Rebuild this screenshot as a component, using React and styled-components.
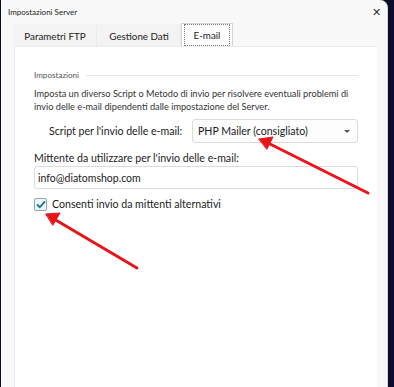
import React from 'react'
import styled, { createGlobalStyle } from 'styled-components'

const GlobalStyle = createGlobalStyle`
  html, body {
    margin: 0;
    padding: 0;
    background: #0b0c2c;
  }
  body {
    font-family: Lato, 'Noto Sans', sans-serif;
    color: #1b1b1b;
  }
`

const Screen = styled.div`
  position: relative;
  width: 394px;
  height: 387px;
  overflow: hidden;
  background: #0b0c2c;
`

const Window = styled.div`
  display: flex;
  flex-direction: column;
  margin-left: 1px;
  width: 387px;
  height: 387px;
  background: #f8f8f8;
  border-right: 1px solid #d6d6d6;
  border-top-right-radius: 8px;
  box-sizing: border-box;
`

const TitleBar = styled.div`
  display: flex;
  align-items: center;
  justify-content: space-between;
  height: 23px;
  padding: 0 6px 0 7px;
  font-size: 8px;
  color: #1a1a1a;
  white-space: nowrap;
`

const Close = styled.span`
  font-size: 11px;
  color: #333;
`

const TabStrip = styled.div`
  display: flex;
  margin-left: 12px;
  height: 23px;
`

const Tab = styled.div`
  display: flex;
  align-items: center;
  justify-content: center;
  width: ${p => p.w}px;
  font-size: 9.8px;
  white-space: nowrap;
  color: #222;
  background: ${p => (p.active ? '#ffffff' : '#f3f3f3')};
  border: 1px solid ${p => (p.active ? '#d4d4d4' : 'transparent')};
  border-bottom: none;
  border-right: 1px solid ${p => (p.active ? '#d4d4d4' : '#ebebeb')};
  box-sizing: border-box;
  margin-top: ${p => (p.active ? '0' : '1px')};
`

const FocusRect = styled.span`
  display: flex;
  align-items: center;
  justify-content: center;
  width: 100%;
  height: 100%;
  margin: 2px;
  box-sizing: border-box;
  border: 1px dotted #777;
`

const Panel = styled.div`
  flex: 1;
  margin: 0 10px 0 13px;
  background: #ffffff;
  border-left: 1px solid #ececec;
  border-top: 1px solid #ececec;
  padding: 22px 19px 0 19px;
`

const GroupHead = styled.div`
  display: flex;
  align-items: center;
  gap: 7px;
  height: 12px;
  font-size: 8.1px;
  color: #555;
  &::after {
    content: '';
    flex: 1;
    height: 1px;
    background: #e4e4e4;
  }
`

const Desc = styled.p`
  margin: 6px 0 0;
  font-size: 9.2px;
  line-height: 13px;
  color: #333;
  white-space: nowrap;
`

const Row = styled.div`
  display: flex;
  align-items: center;
  height: ${p => p.h || 14}px;
  margin-top: ${p => p.mt || 0}px;
  padding-left: ${p => p.indent || 0}px;
  white-space: nowrap;
`

const Label = styled.span`
  font-size: 10.6px;
  color: #1b1b1b;
`

const Select = styled.div`
  display: flex;
  align-items: center;
  justify-content: space-between;
  margin-left: auto;
  width: 166px;
  height: 24px;
  box-sizing: border-box;
  padding: 0 7px 0 5px;
  border: 1px solid #dcdcdc;
  border-radius: 3px;
  background: #fdfdfd;
  font-size: 10.6px;
  color: #1b1b1b;
`

const Caret = styled.span`
  width: 0;
  height: 0;
  border-left: 3px solid transparent;
  border-right: 3px solid transparent;
  border-top: 3px solid #555;
`

const Input = styled.div`
  display: flex;
  align-items: center;
  margin-top: 1px;
  height: 23px;
  box-sizing: border-box;
  padding: 0 3px;
  border: 1px solid #dcdcdc;
  border-radius: 3px;
  font-size: 10.5px;
  color: #1b1b1b;
`

const Check = styled.span`
  display: flex;
  align-items: center;
  justify-content: center;
  width: 13px;
  height: 13px;
  margin-right: 5px;
  box-sizing: border-box;
  border: 1px solid #8aa9b8;
  border-radius: 2px;
  background: #eef4f7;
`

const Arrows = styled.svg`
  position: absolute;
  left: 0;
  top: 0;
  pointer-events: none;
`

export default function App() {
  return (
    <Screen>
      <GlobalStyle />
      <Window>
        <TitleBar>
          <span>Impostazioni Server</span>
          <Close>✕</Close>
        </TitleBar>
        <TabStrip>
          <Tab w={84}>Parametri FTP</Tab>
          <Tab w={84}>Gestione Dati</Tab>
          <Tab w={52} active><FocusRect>E-mail</FocusRect></Tab>
        </TabStrip>
        <Panel>
          <GroupHead>Impostazioni</GroupHead>
          <Desc>
            Imposta un diverso Script o Metodo di invio per risolvere eventuali problemi di
            <br />
            invio delle e-mail dipendenti dalle impostazione del Server.
          </Desc>
          <Row mt={6} h={24} indent={15}>
            <Label>Script per l'invio delle e-mail:</Label>
            <Select>
              PHP Mailer (consigliato)
              <Caret />
            </Select>
          </Row>
          <Row mt={8}>
            <Label>Mittente da utilizzare per l'invio delle e-mail:</Label>
          </Row>
          <Input>info@diatomshop.com</Input>
          <Row mt={8}>
            <Check>
              <svg width="10" height="9" viewBox="0 0 10 9">
                <path d="M1 4.5 L3.8 7.3 L9 1.3" fill="none" stroke="#1d6f8c" strokeWidth="1.8" />
              </svg>
            </Check>
            <Label>Consenti invio da mittenti alternativi</Label>
          </Row>
        </Panel>
      </Window>
      <Arrows width="394" height="387" viewBox="0 0 394 387">
        <g stroke="#e8141a" strokeWidth="3" strokeLinecap="round" fill="#e8141a">
          <line x1="368" y1="193" x2="268" y2="143" />
          <polygon points="259,139 273,137 267,149" strokeWidth="1" strokeLinejoin="round" />
          <line x1="137" y1="268" x2="54" y2="219" />
          <polygon points="46,214 60,213 53,225" strokeWidth="1" strokeLinejoin="round" />
        </g>
      </Arrows>
    </Screen>
  )
}
